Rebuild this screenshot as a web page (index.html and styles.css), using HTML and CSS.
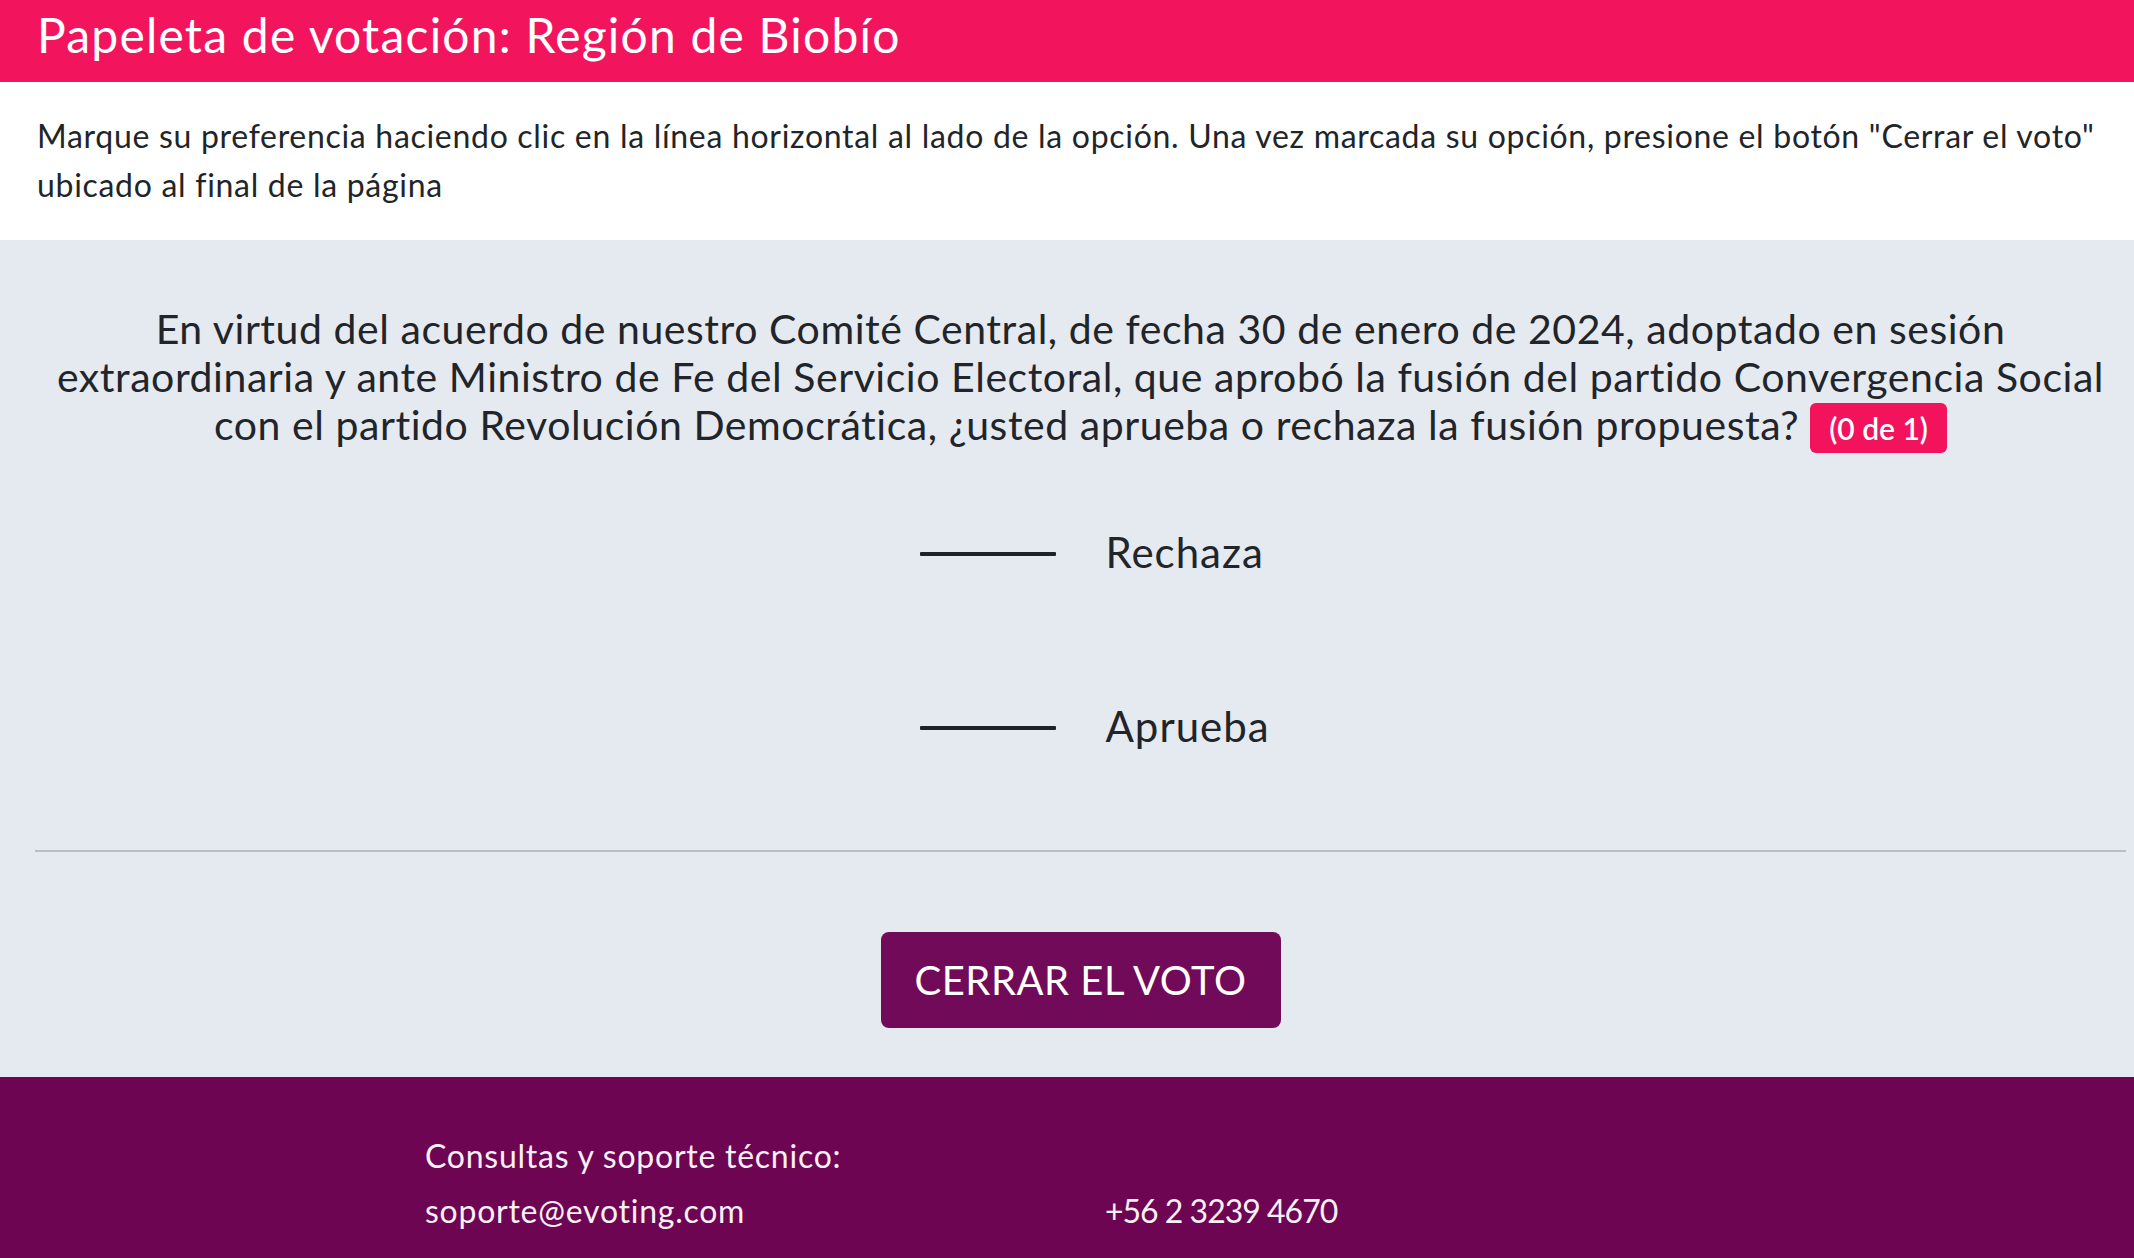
FILE: index.html
```html
<!DOCTYPE html>
<html lang="es">
<head>
<meta charset="utf-8">
<title>Papeleta de votación</title>
<link rel="stylesheet" href="styles.css">
</head>
<body>
<header class="top-bar">
  <h1 class="title">Papeleta de votación: Región de Biobío</h1>
</header>
<section class="intro">
  <p class="intro-text">Marque su preferencia haciendo clic en la línea horizontal al lado de la opción. Una vez marcada su opción, presione el botón "Cerrar el voto" ubicado al final de la página</p>
</section>
<main class="ballot">
  <p class="question">En virtud del acuerdo de nuestro Comité Central, de fecha 30 de enero de 2024, adoptado en sesión extraordinaria y ante Ministro de Fe del Servicio Electoral, que aprobó la fusión del partido Convergencia Social con el partido Revolución Democrática, ¿usted aprueba o rechaza la fusión propuesta? <span class="badge">(0 de 1)</span></p>
  <div class="options">
    <div class="option">
      <span class="mark"></span>
      <span class="label">Rechaza</span>
    </div>
    <div class="option">
      <span class="mark"></span>
      <span class="label">Aprueba</span>
    </div>
  </div>
  <hr class="divider">
  <div class="actions">
    <button class="close-btn" type="button">CERRAR EL VOTO</button>
  </div>
</main>
<footer class="footer">
  <div class="footer-grid">
    <div class="footer-head">Consultas y soporte técnico:</div>
    <div class="footer-cell">soporte@evoting.com</div>
    <div class="footer-cell footer-phone">+56 2 3239 4670</div>
  </div>
</footer>
</body>
</html>
```
FILE: styles.css
```css
html, body {
  margin: 0;
  padding: 0;
}
body {
  font-family: "Lato", "Noto Sans", sans-serif;
  color: #212529;
  background: #e5e9f0;
}
.top-bar {
  background: #f2155d;
  height: 82px;
  box-sizing: border-box;
  padding: 6px 37px 0;
}
.title {
  margin: 0;
  color: #ffffff;
  font-weight: 400;
  font-size: 48px;
  letter-spacing: 1.2px;
  line-height: 1.2;
}
.intro {
  background: #ffffff;
  padding: 29px 8px 31px 37px;
}
.intro-text {
  margin: 0;
  font-size: 32px;
  letter-spacing: 0.7px;
  line-height: 49px;
}
.ballot {
  padding: 65px 8px 49px 35px;
}
.question {
  margin: 0;
  text-align: center;
  font-size: 41px;
  letter-spacing: 0.55px;
  line-height: 48px;
}
.badge {
  display: inline-block;
  background: #f2135c;
  color: #ffffff;
  font-size: 30px;
  font-weight: 600;
  letter-spacing: 0;
  line-height: 1;
  padding: 10px 19px;
  border-radius: 6px;
  vertical-align: baseline;
}
.options {
  margin-top: 12px;
}
.option {
  display: grid;
  grid-template-columns: 1fr 1fr;
  column-gap: 50px;
  align-items: center;
  height: 174px;
}
.mark {
  justify-self: end;
  width: 136px;
  height: 4px;
  background: #1f2328;
  border-radius: 1px;
  margin-top: 4px;
}
.label {
  justify-self: start;
  font-size: 42px;
  letter-spacing: 1px;
  line-height: 48px;
}
.divider {
  margin: 37px 0 0;
  border: 0;
  height: 2px;
  background: #b9bec5;
}
.actions {
  display: flex;
  justify-content: center;
  padding-top: 80px;
}
.close-btn {
  width: 400px;
  height: 96px;
  background: #710a58;
  color: #ffffff;
  border: 0;
  border-radius: 8px;
  font-family: inherit;
  font-size: 40px;
  font-weight: 400;
  letter-spacing: 0.5px;
  padding: 0;
}
.footer {
  background: #6d0553;
  color: #f7f0f5;
  padding: 60px 0 30px 425px;
  min-height: 200px;
}
.footer-grid {
  display: grid;
  grid-template-columns: 680px auto;
  row-gap: 18px;
  font-size: 32px;
  letter-spacing: 0.75px;
  line-height: 37px;
}
.footer-head {
  grid-column: 1 / -1;
}
.footer-phone {
  letter-spacing: -1px;
}
```
